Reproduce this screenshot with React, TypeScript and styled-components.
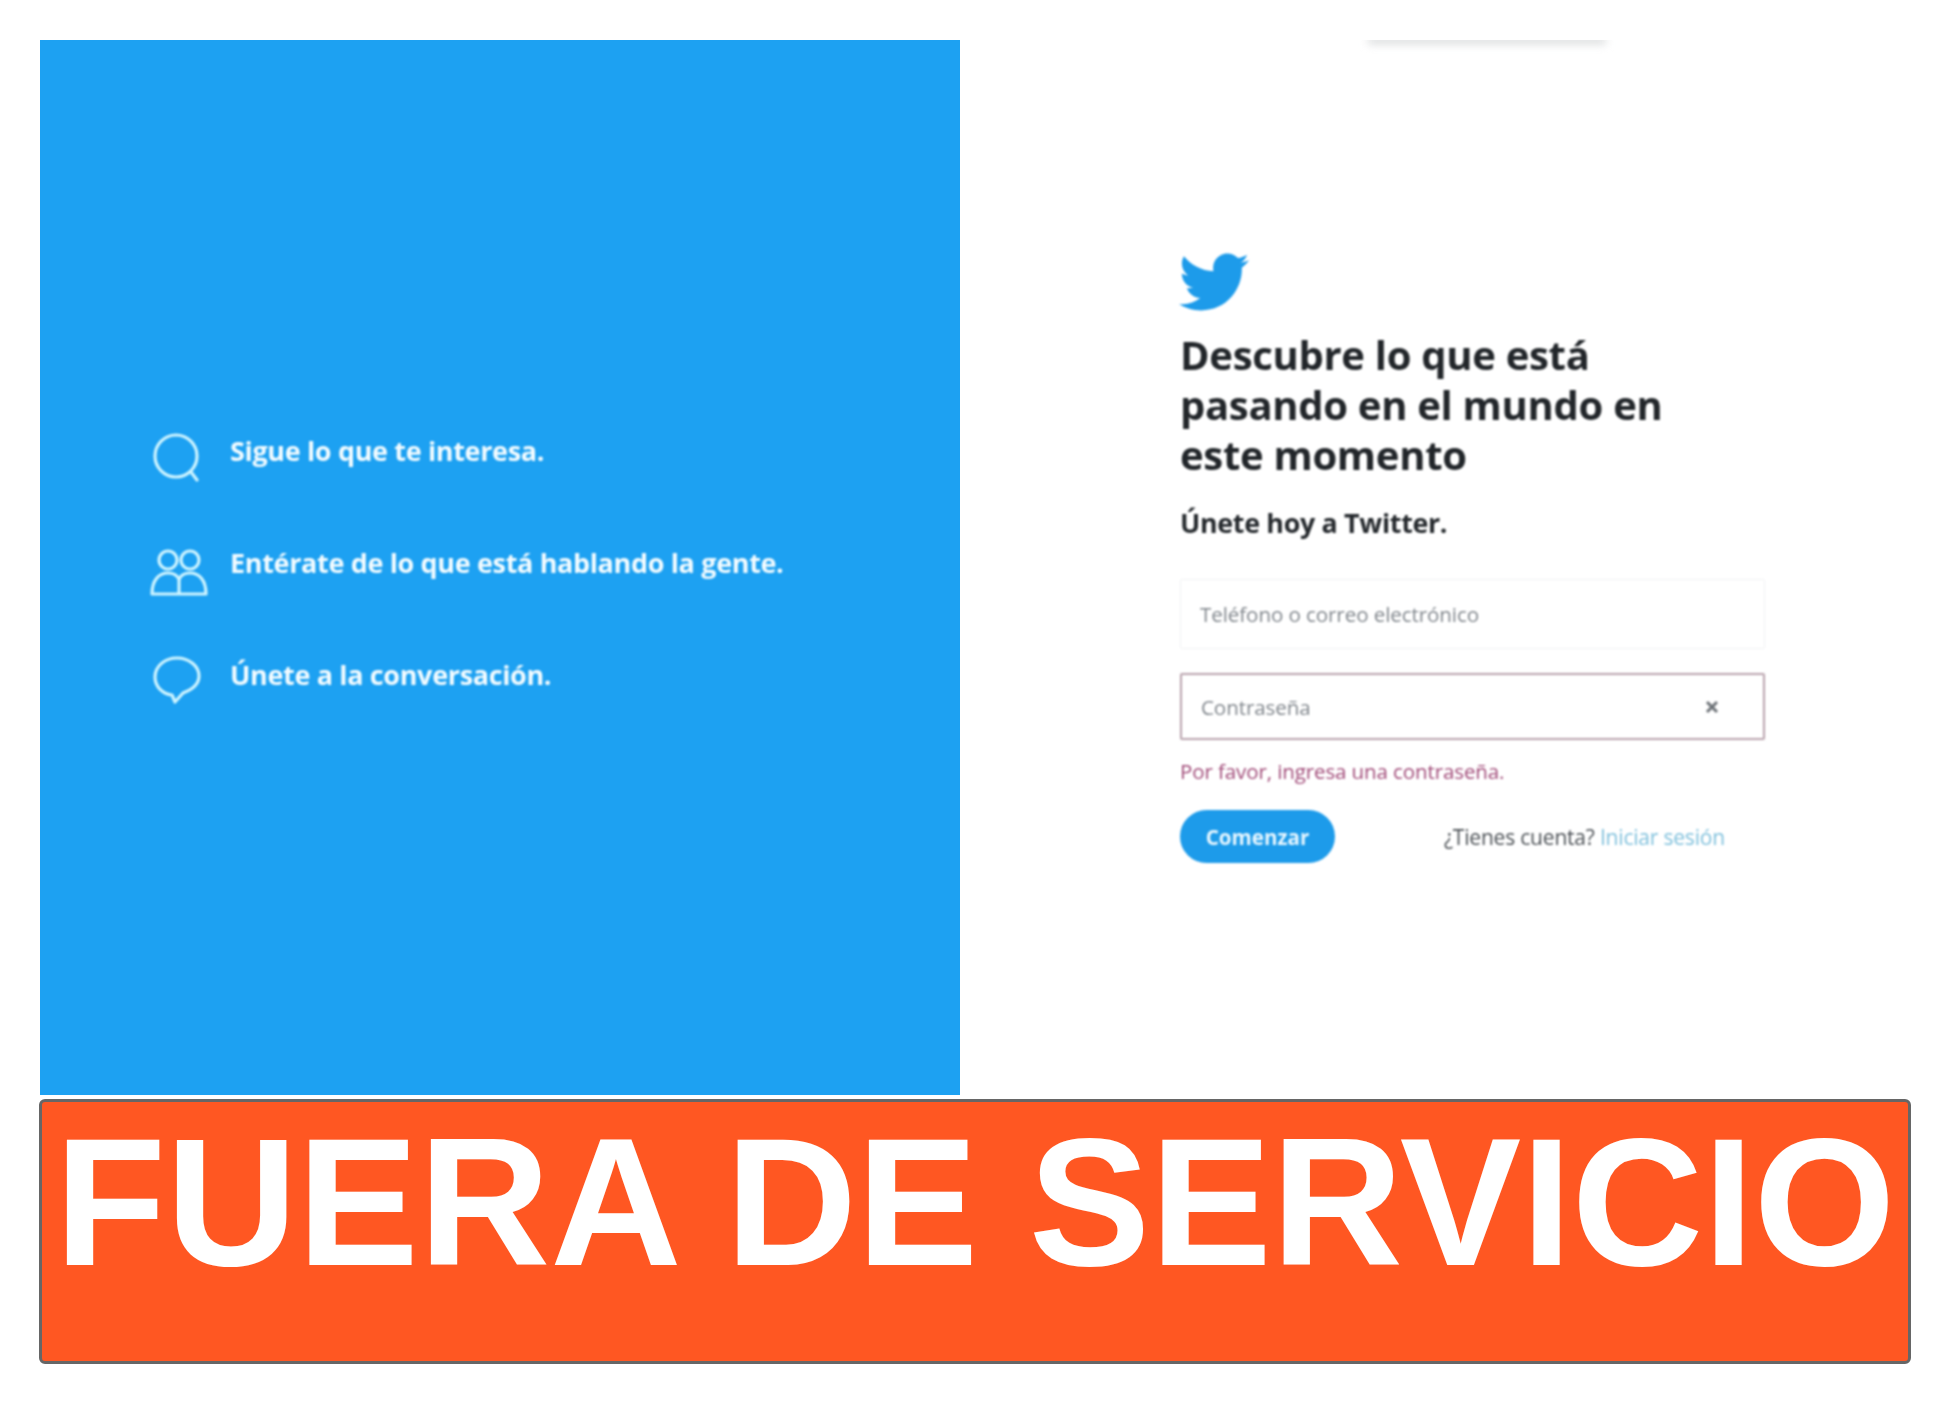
import React from "react";
import styled, { createGlobalStyle } from "styled-components";
import { FaTwitter } from "react-icons/fa";

const GlobalStyle = createGlobalStyle`
  html, body {
    margin: 0;
    background: #fff;
  }
`;

const Page = styled.div`
  padding: 40px 39px 39px;
  font-family: "Open Sans", "Liberation Sans", sans-serif;
`;

const Hero = styled.div`
  display: grid;
  grid-template-columns: 920px 1fr;
  height: 1055px;
  margin-left: 1px;
  overflow: hidden;
`;

const BluePanel = styled.section`
  display: flex;
  flex-direction: column;
  justify-content: center;
  gap: 64px;
  padding-left: 110px;
  background: #1da1f2;
`;

const Feature = styled.div`
  display: flex;
  align-items: center;
  gap: 20px;
  height: 48px;
  filter: blur(1.2px);
`;

const FeatureIcon = styled.svg`
  width: 60px;
  height: 48px;
  flex: none;
  overflow: visible;
  fill: none;
  stroke: #d0f5ff;
  stroke-width: 3.2;
`;

const FeatureText = styled.span`
  margin-bottom: 10px;
  font-size: 27px;
  font-weight: 700;
  letter-spacing: -0.35px;
  color: #f4fcff;
`;

const WhitePanel = styled.section`
  position: relative;
  padding: 207px 0 0 220px;
  background: #fff;
`;

const TopSmudge = styled.div`
  position: absolute;
  top: -3px;
  left: 408px;
  width: 238px;
  height: 7px;
  background: #d8dadb;
  filter: blur(4px);
`;

const Bird = styled(FaTwitter)`
  display: block;
  width: 72px;
  height: 70px;
  margin-left: -2px;
  color: #1d9bea;
  filter: blur(1.3px);
`;

const Title = styled.h1`
  width: 520px;
  margin: 13px 0 0;
  font-size: 40px;
  font-weight: 700;
  line-height: 50px;
  letter-spacing: -0.3px;
  color: #22262a;
  filter: blur(1.1px);
`;

const Subtitle = styled.h2`
  margin: 26px 0 0;
  font-size: 26.8px;
  font-weight: 700;
  line-height: 34px;
  letter-spacing: -0.3px;
  color: #25292d;
  filter: blur(1.1px);
`;

const Field = styled.div<{ $error?: boolean }>`
  box-sizing: border-box;
  display: flex;
  align-items: center;
  width: 585px;
  height: ${(p) => (p.$error ? "67px" : "70px")};
  margin-top: ${(p) => (p.$error ? "24px" : "39px")};
  padding: 0 19px;
  border: ${(p) => (p.$error ? "2px solid #b9a3ad" : "1px solid #f1f2f3")};
  border-radius: 2px;
  filter: blur(1.3px);
`;

const FieldInput = styled.input`
  flex: 1;
  min-width: 0;
  padding: 0;
  border: 0;
  outline: 0;
  background: transparent;
  font-family: inherit;
  font-size: 20.6px;
  letter-spacing: -0.1px;

  &::placeholder {
    color: #80868c;
    opacity: 1;
  }
`;

const ClearIcon = styled.svg`
  width: 18px;
  height: 18px;
  margin-right: 23px;
  fill: none;
  stroke: #6e7378;
  stroke-width: 3;
`;

const ErrorText = styled.p`
  margin: 19px 0 0;
  font-size: 20.5px;
  line-height: 24px;
  letter-spacing: -0.1px;
  color: #a04a78;
  filter: blur(1.2px);
`;

const ActionRow = styled.div`
  display: flex;
  align-items: center;
  width: 585px;
  margin-top: 27px;
`;

const StartButton = styled.button`
  width: 155px;
  height: 53px;
  padding: 0;
  border: 0;
  border-radius: 27px;
  background: #1d9bea;
  color: #e8f7ff;
  font-family: inherit;
  font-size: 20.6px;
  font-weight: 700;
  filter: blur(1.2px);
`;

const AccountLine = styled.span`
  margin-left: 109px;
  font-size: 21px;
  letter-spacing: -0.2px;
  color: #4a4f54;
  filter: blur(1.2px);
`;

const AccountLink = styled.a`
  color: #7fc0dc;
`;

const Banner = styled.div`
  box-sizing: border-box;
  height: 265px;
  margin-top: 4px;
  border: 3px solid #666;
  border-radius: 6px;
  background: #ff5722;
  color: #fff;
  font-family: "Liberation Sans", Arial, sans-serif;
  font-size: 182px;
  font-weight: 700;
  line-height: 200px;
  text-align: center;
  white-space: nowrap;
  overflow: hidden;
`;

const SearchGlyph = () => (
  <FeatureIcon viewBox="0 0 60 48">
    <circle cx="26" cy="24" r="21" />
    <path d="M41 40l6 8" strokeLinecap="round" />
  </FeatureIcon>
);

const PeopleGlyph = () => (
  <FeatureIcon viewBox="0 0 60 48">
    <circle cx="18" cy="16" r="9" />
    <circle cx="40" cy="16" r="9" />
    <path d="M2 50c0-14 7-21 16-21 5 0 9 2 11 6 2-4 6-6 11-6 9 0 16 7 16 21z" strokeLinejoin="round" />
    <path d="M29 35v15" />
  </FeatureIcon>
);

const BubbleGlyph = () => (
  <FeatureIcon viewBox="0 0 60 48">
    <path
      d="M27 2C15 2 5 10 5 21c0 10 8 17 17 18l3 7 8-9c8-3 16-8 16-17C49 10 39 2 27 2z"
      strokeLinejoin="round"
    />
  </FeatureIcon>
);

export default function App() {
  return (
    <>
      <GlobalStyle />
      <Page>
        <Hero>
          <BluePanel>
            <Feature>
              <SearchGlyph />
              <FeatureText>Sigue lo que te interesa.</FeatureText>
            </Feature>
            <Feature>
              <PeopleGlyph />
              <FeatureText>Entérate de lo que está hablando la gente.</FeatureText>
            </Feature>
            <Feature>
              <BubbleGlyph />
              <FeatureText>Únete a la conversación.</FeatureText>
            </Feature>
          </BluePanel>
          <WhitePanel>
            <TopSmudge />
            <Bird />
            <Title>Descubre lo que está pasando en el mundo en este momento</Title>
            <Subtitle>Únete hoy a Twitter.</Subtitle>
            <Field>
              <FieldInput placeholder="Teléfono o correo electrónico" />
            </Field>
            <Field $error>
              <FieldInput placeholder="Contraseña" />
              <ClearIcon viewBox="0 0 18 18">
                <path d="M4 4l10 10M14 4L4 14" />
              </ClearIcon>
            </Field>
            <ErrorText>Por favor, ingresa una contraseña.</ErrorText>
            <ActionRow>
              <StartButton>Comenzar</StartButton>
              <AccountLine>
                ¿Tienes cuenta? <AccountLink>Iniciar sesión</AccountLink>
              </AccountLine>
            </ActionRow>
          </WhitePanel>
        </Hero>
        <Banner>FUERA DE SERVICIO</Banner>
      </Page>
    </>
  );
}
